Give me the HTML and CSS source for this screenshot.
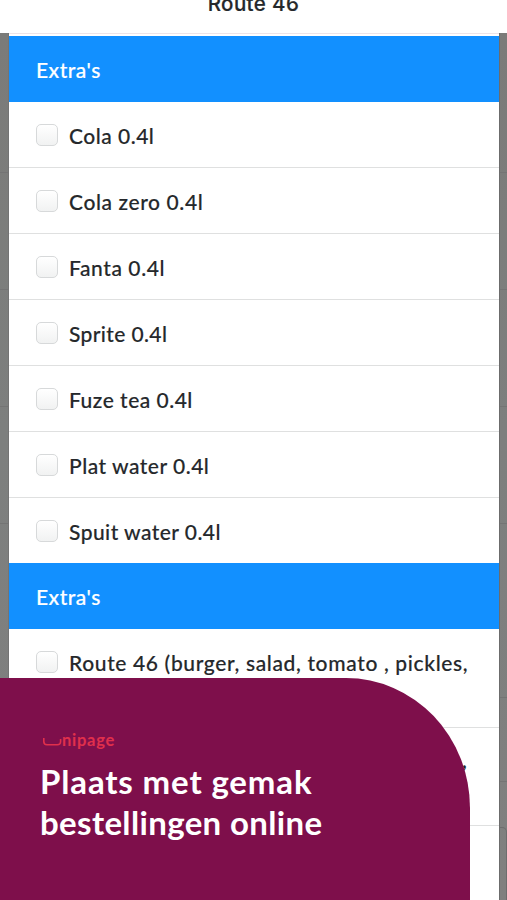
FILE: index.html
```html
<!DOCTYPE html>
<html lang="nl">
<head>
<meta charset="utf-8">
<title>Route 46</title>
<link rel="stylesheet" href="styles.css">
</head>
<body>
<div class="screen">
  <header class="topbar"><span class="topbar-title">Route 46</span></header>
  <div class="stage">
    <div class="side side-left"><i></i><i></i><i></i><i></i></div>
    <main class="sheet">
      <h2 class="group">Extra's</h2>
      <label class="row"><span class="box"></span><span class="name cola">Cola 0.4l</span></label>
      <label class="row"><span class="box"></span><span class="name zero">Cola zero 0.4l</span></label>
      <label class="row"><span class="box"></span><span class="name fanta">Fanta 0.4l</span></label>
      <label class="row"><span class="box"></span><span class="name sprite">Sprite 0.4l</span></label>
      <label class="row"><span class="box"></span><span class="name fuze">Fuze tea 0.4l</span></label>
      <label class="row"><span class="box"></span><span class="name plat">Plat water 0.4l</span></label>
      <label class="row"><span class="box"></span><span class="name spuit">Spuit water 0.4l</span></label>
      <h2 class="group">Extra's</h2>
      <label class="row tall"><span class="box"></span><span class="name route">Route 46 (burger, salad, tomato , pickles,</span></label>
      <label class="row tall"><span class="box"></span><span class="name tail">,</span></label>
    </main>
    <div class="side side-right"><i></i><i></i><i></i><i></i><i></i><i></i><b></b></div>
  </div>
  <section class="promo">
    <div class="brand">
      <svg class="brand-u" width="20" height="10" viewBox="0 0 20 10"><path d="M1.8 1V4.5Q1.8 7.8 5 7.8H15.2Q18.6 7.8 18.6 4.5V2" fill="none" stroke="#e0304c" stroke-width="1.6"/></svg><span class="brand-name">nipage</span>
    </div>
    <p class="line one">Plaats met gemak</p>
    <p class="line two">bestellingen online</p>
  </section>
</div>
</body>
</html>
```
FILE: styles.css
```css
* { box-sizing: border-box; }
body { margin: 0; background: #fff; }
.screen {
  position: relative;
  width: 507px;
  height: 900px;
  overflow: hidden;
  font-family: Lato, "Open Sans", sans-serif;
  color: #25282b;
}
.topbar {
  height: 33px;
  display: flex;
  justify-content: center;
  background: #fff;
}
.topbar-title {
  margin-top: -8.5px;
  height: 24px;
  font: 500 20.5px/24px Inter, sans-serif;
  letter-spacing: 0.4px;
  -webkit-text-stroke: 0.2px;
  white-space: nowrap;
}
.stage {
  display: grid;
  grid-template-columns: 9px 490px 8px;
  height: 867px;
}
.side {
  background: linear-gradient(#7b7b79, #7d7f7e 45%, #80807f);
  display: flex;
  flex-direction: column;
}
.side-left { border-right: 1px solid #747474; }
.side-right { border-left: 1px solid #6c6c6c; }
.side i { height: 117px; border-bottom: 1px solid #747474; flex: none; }
.side-left i:first-child, .side-right i:first-child { height: 140px; }
.side-right i:nth-child(5) { height: 174px; }
.side-right i:nth-child(6) { height: 84px; }
.side-right b { margin-top: 45px; height: 90px; border: 1px solid #6d6d6d; border-left: 0; border-top-right-radius: 5px; }
.sheet {
  background: #fff;
  border-top: 1px solid #eee4e8;
  padding-top: 2px;
  overflow: hidden;
}
.group {
  margin: 0;
  height: 66px;
  padding-left: 27px;
  background: #1290ff;
  color: #fff;
  font-size: 21px;
  font-weight: 500;
  line-height: 67px;
  letter-spacing: 0.5px;
  -webkit-text-stroke: 0.2px;
}
.row {
  display: flex;
  gap: 11px;
  height: 66px;
  padding: 22px 0 0 27px;
  border-bottom: 1px solid #dfe0e0;
}
.row:has(+ .group) { height: 65px; border-bottom: 0; }
.row.tall { height: 98.5px; }
.box {
  flex: none;
  width: 22px;
  height: 22px;
  border: 1px solid #d7d9da;
  border-radius: 5px;
  background: linear-gradient(#fff, #f1f2f2);
}
.name {
  margin-top: -1px;
  font-size: 21px;
  font-weight: 500;
  line-height: 25px;
  white-space: nowrap;
  letter-spacing: 0.5px;
  -webkit-text-stroke: 0.15px;
}
.zero { letter-spacing: 0.6px; }
.fanta { letter-spacing: 0.58px; }
.sprite { letter-spacing: 0.38px; }
.spuit { letter-spacing: 0.45px; }
.route { letter-spacing: 0.64px; }
.tail { margin: -3px 0 0 393px; }
.promo {
  position: absolute;
  left: 0;
  top: 678px;
  width: 470px;
  height: 222px;
  padding: 52px 0 0 40px;
  background: #7e0f4b;
  border-top-right-radius: 124px 130px;
  color: #fff;
}
.brand { display: flex; height: 20px; padding-left: 2px; }
.brand-u { margin-top: 7px; }
.brand-name {
  font-size: 16.5px;
  font-weight: 700;
  line-height: 20px;
  letter-spacing: 0.75px;
  color: #e0304c;
}
.line {
  margin: 0;
  font-size: 33px;
  font-weight: 700;
  line-height: 41px;
  white-space: nowrap;
}
.line.one { margin-top: 11px; letter-spacing: 0.85px; }
.line.two { letter-spacing: 0.35px; }
```
